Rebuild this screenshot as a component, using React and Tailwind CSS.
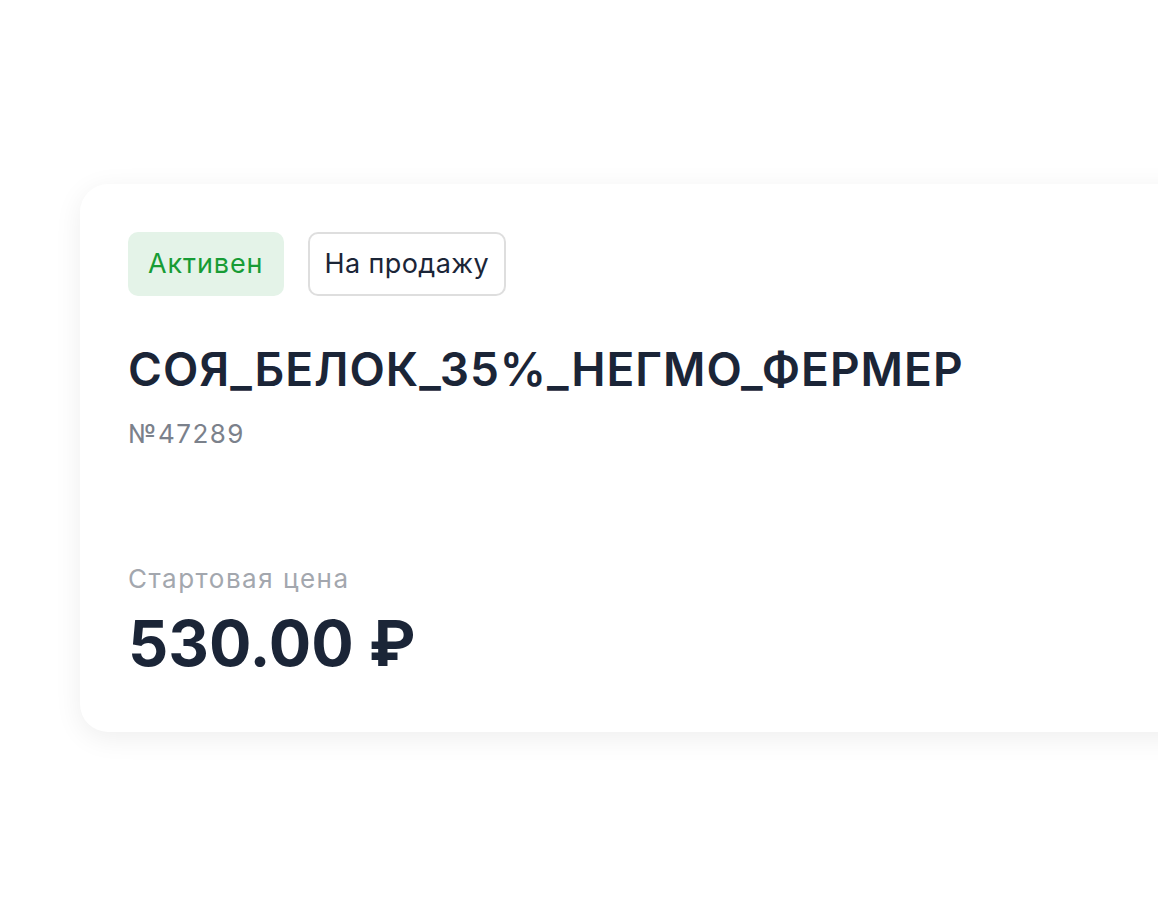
const LotCard = () => {
  return (
    <div className="w-[1200px] rounded-[28px] bg-white shadow-[0_6px_28px_rgba(0,0,0,0.07)] px-12 pt-12 pb-[57px]">
      <div className="flex items-center gap-6">
        <span className="h-16 flex items-center px-[20px] rounded-[10px] bg-[#e4f3e8] text-[#179c35] text-[27px] tracking-[0.9px]">Активен</span>
        <span className="h-16 flex items-center px-[15px] rounded-[10px] border-2 border-[#dedede] text-[#1b2537] text-[27px] tracking-[0.4px]">На продажу</span>
      </div>
      <h1 className="mt-[50px] text-[46px] leading-none font-semibold tracking-[1px] text-[#1b2537]">СОЯ_БЕЛОК_35%_НЕГМО_ФЕРМЕР</h1>
      <p className="mt-[29px] text-[26px] leading-none tracking-[1.5px] text-[#7b818b]">№47289</p>
      <p className="mt-[119px] text-[26px] leading-none tracking-[1.5px] text-[#a3a7ae]">Стартовая цена</p>
      <p className="mt-[20px] text-[63px] leading-none font-bold text-[#1b2537]">530.00 ₽</p>
    </div>
  );
};

export default function App() {
  return (
    <div className="min-h-screen w-full overflow-hidden bg-white pt-[184px] pl-[80px] font-['Inter',sans-serif]">
      <LotCard />
    </div>
  );
}
